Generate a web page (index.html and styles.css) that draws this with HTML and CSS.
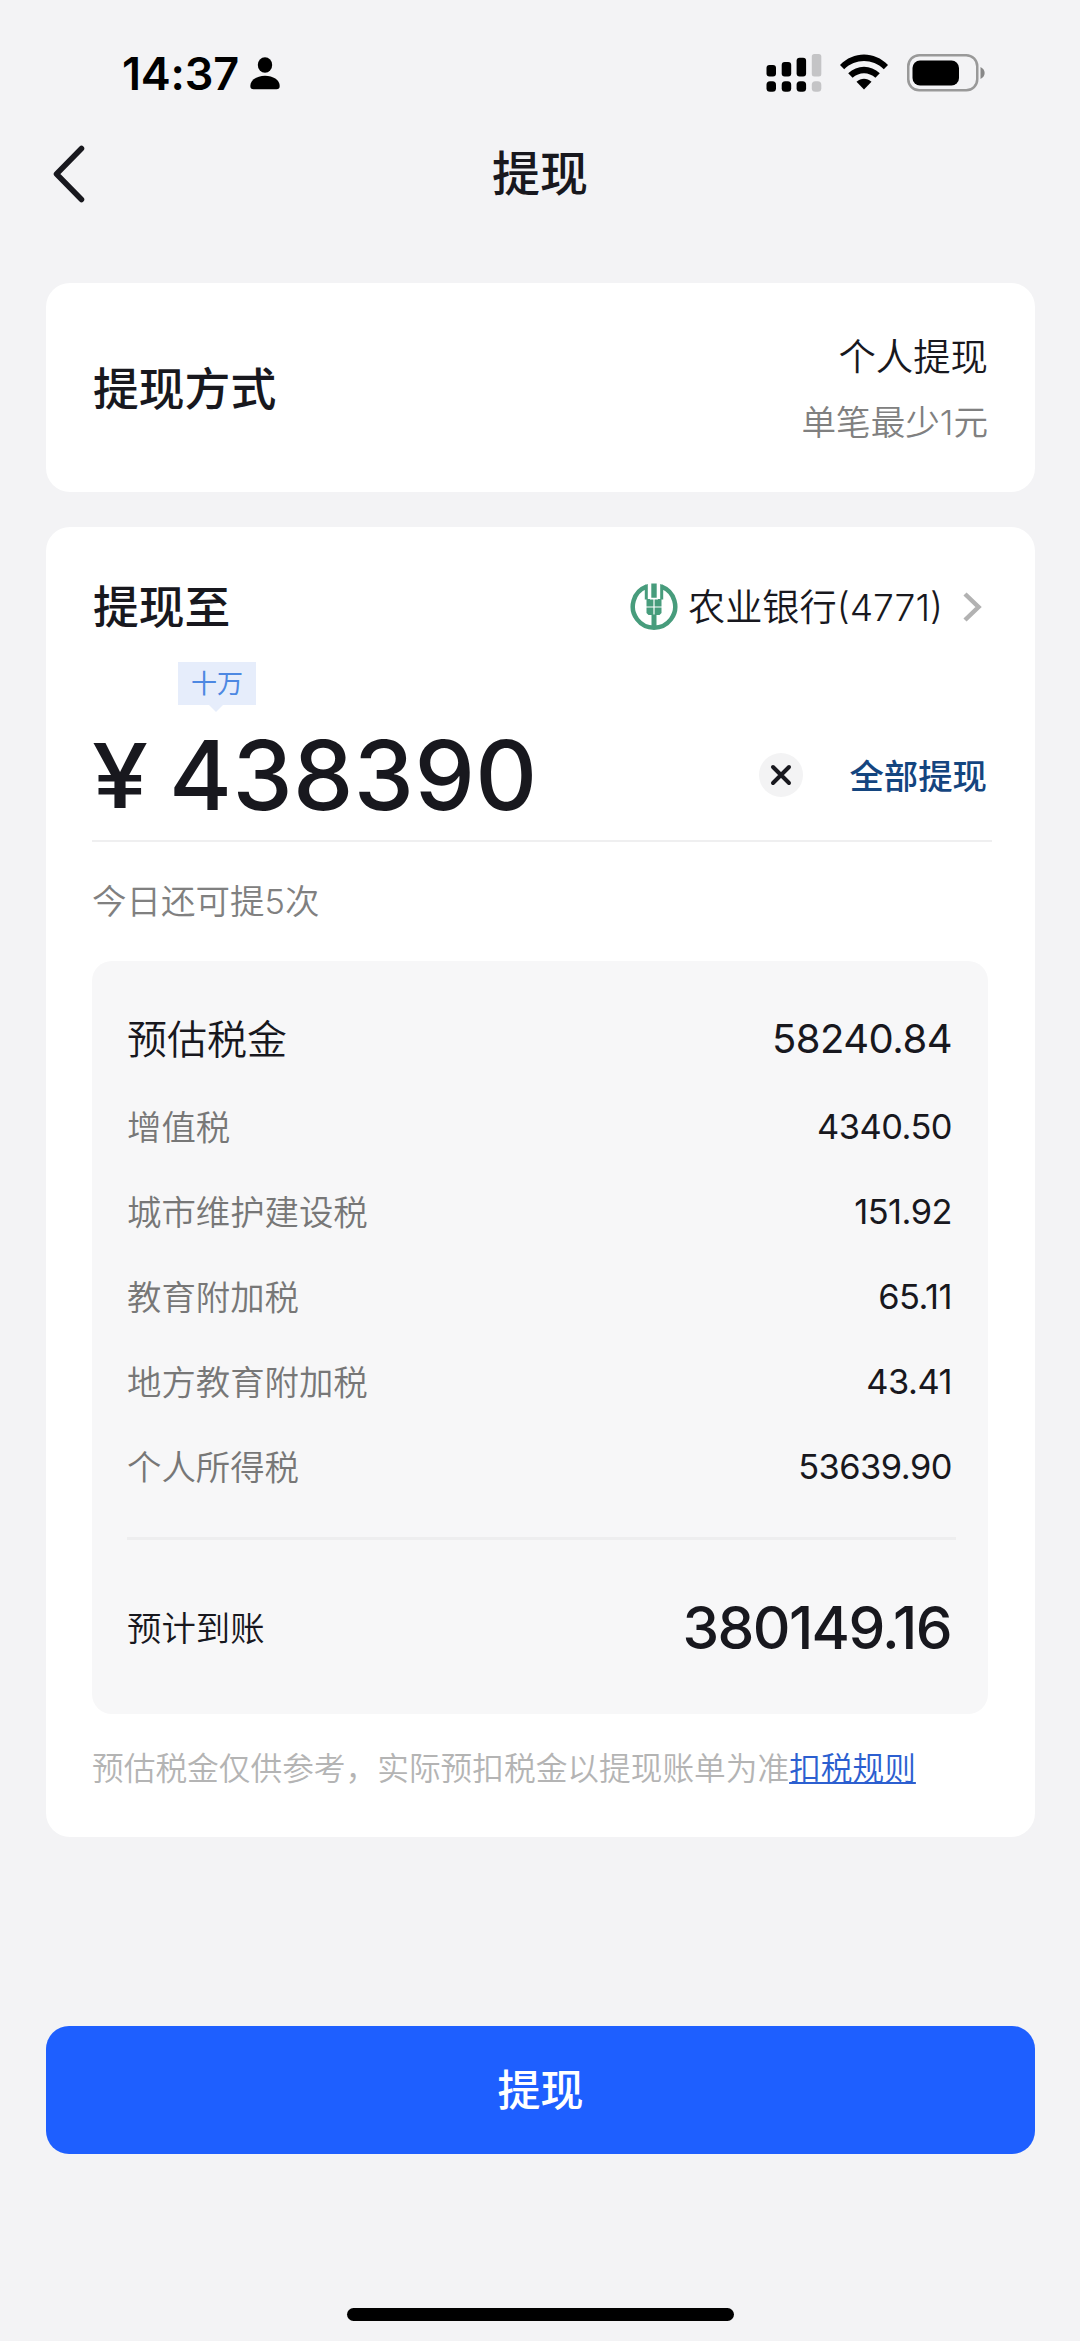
FILE: index.html
```html
<!DOCTYPE html>
<html lang="zh-CN">
<head>
<meta charset="utf-8">
<title>提现</title>
<link rel="stylesheet" href="styles.css">
</head>
<body>
<header class="status">
  <div class="status-left">
    <span class="time">14:37</span>
    <svg class="person" width="30" height="33" viewBox="0 0 30 33"><ellipse cx="15" cy="8" rx="7.2" ry="7.7"/><path d="M0.3 29C0.3 23 7 18.8 15 18.8S29.700 23 29.700 29C29.700 31.300 28.600 32.300 26.500 32.300H3.500C1.400 32.300 0.300 31.300 0.300 29Z"/></svg>
  </div>
  <div class="status-right">
    <svg width="56" height="38" viewBox="0 0 56 38">
      <rect x="0.500" y="11" width="9.500" height="11.500" rx="3"/><rect x="15.700" y="8" width="9.500" height="14.500" rx="3"/><rect x="30.600" y="3.800" width="9.500" height="18.700" rx="3"/><rect class="dim" x="45.800" y="0" width="9.500" height="22.500" rx="2.500"/>
      <rect x="0.500" y="27.200" width="9.500" height="10.500" rx="3.500"/><rect x="15.700" y="27.200" width="9.500" height="10.500" rx="3.500"/><rect x="30.600" y="27.200" width="9.500" height="10.500" rx="3.500"/><rect class="dim" x="45.800" y="27.200" width="9.500" height="10.500" rx="3.500"/>
    </svg>
    <svg class="wifi" width="50" height="36" viewBox="0 0 50 36"><path d="M1 11C14.500 -3 35.500 -3 49 11L44.800 15.200C33.500 4.300 16.500 4.300 5.200 15.200Z"/><path d="M9.200 19.300C18.200 10.500 31.800 10.500 40.800 19.300L36.400 23.800C29.800 17.600 20.200 17.600 13.600 23.800Z"/><path d="M17.500 27.800C22 23.800 28 23.800 32.500 27.800L25 35.500Z"/></svg>
    <svg class="battery" width="79" height="38" viewBox="0 0 79 38"><rect class="case" x="1.250" y="1.250" width="69" height="35" rx="11"/><rect x="5.500" y="6.500" width="46.500" height="25" rx="7.500"/><path class="nub" d="M73.500 13C79 15.500 79 22.500 73.500 25Z"/></svg>
  </div>
</header>
<nav class="nav">
  <svg class="back" width="34" height="60" viewBox="0 0 34 60"><path d="M29.500 4.500L4.500 30L29.500 55.500"/></svg>
  <h1>提现</h1>
</nav>
<main>
  <section class="card method">
    <h2>提现方式</h2>
    <div class="method-value">
      <div class="choice">个人提现</div>
      <div class="hint">单笔最少1元</div>
    </div>
  </section>
  <section class="card detail">
    <div class="target">
      <h2>提现至</h2>
      <div class="bank">
        <svg width="48" height="48" viewBox="0 0 48 48">
          <path class="ring" d="M16.500 3.700A21.200 21.200 0 1 0 31.500 3.700"/>
          <path class="wheat" d="M21.300 .5H26.700V14.800H21.300ZM14.800 2L17.800 1V16H20V16.500H23.400V23.400H16.500V16.500H14.800ZM33.200 2L30.200 1V16H28V16.500H24.600V23.400H31.500V16.500H33.200ZM16.500 24.600H23.400V32H18.500L16.500 30ZM24.600 24.600H31.500V30L29.500 32H24.600ZM21.500 31.500H26.500V45H21.500Z"/>
        </svg>
        <span class="bank-name">农业银行(4771)</span>
        <svg class="next" width="20" height="32" viewBox="0 0 20 32"><path d="M3 3L16.500 16L3 29"/></svg>
      </div>
    </div>
    <div class="amount">
      <span class="yen">¥</span>
      <span class="digits">438390<span class="unit">十万</span></span>
      <svg class="clear" width="44" height="44" viewBox="0 0 44 44"><circle cx="22" cy="22" r="22"/><path d="M14 14L30 30M30 14L14 30"/></svg>
      <span class="all">全部提现</span>
    </div>
    <div class="remain">今日还可提5次</div>
    <div class="panel">
      <div class="row total"><span>预估税金</span><b>58240.84</b></div>
      <div class="row"><span>增值税</span><b>4340.50</b></div>
      <div class="row"><span>城市维护建设税</span><b>151.92</b></div>
      <div class="row"><span>教育附加税</span><b>65.11</b></div>
      <div class="row"><span>地方教育附加税</span><b>43.41</b></div>
      <div class="row"><span>个人所得税</span><b>53639.90</b></div>
      <div class="arrival"><span>预计到账</span><b>380149.16</b></div>
    </div>
    <p class="note">预估税金仅供参考，实际预扣税金以提现账单为准<a>扣税规则</a></p>
  </section>
  <button class="submit">提现</button>
</main>
<div class="home"></div>
</body>
</html>
```

FILE: styles.css
```css
* { box-sizing: border-box; }
body {
  margin: 0;
  height: 2341px;
  display: flex;
  flex-direction: column;
  background: #f3f3f5;
  color: #18181e;
  font-family: Inter, "Noto Sans CJK SC", sans-serif;
  overflow: hidden;
}
svg { display: block; flex: none; }
h1, h2, p { margin: 0; font-weight: 500; }
h1, h2, span, div, b, p { white-space: nowrap; }

.status {
  height: 146px;
  padding: 54px 94px 0 122px;
  display: flex;
  justify-content: space-between;
  align-items: flex-start;
}
.status-left { display: flex; align-items: flex-start; color: #000; }
.time { width: 128px; font-size: 45px; font-weight: 600; line-height: 40px; letter-spacing: -0.200px; }
.person { margin-top: 3px; }
.status-right { display: flex; }
.wifi { margin-left: 17px; }
.battery { margin-left: 18px; }
.dim { fill: #c4c4c6; }
.case { fill: none; stroke: #999; stroke-width: 2.500; }
.nub { fill: #888; }

.nav {
  height: 137px;
  padding: 0 52px;
  display: grid;
  grid-template-columns: 34px 1fr 34px;
}
.back { margin-top: -2px; }
.back path { fill: none; stroke: #18181e; stroke-width: 5.500; stroke-linecap: round; stroke-linejoin: round; }
h1 { font-size: 48px; line-height: 56px; text-align: center; }

main { padding: 0 45px 0 46px; display: flex; flex-direction: column; }
.card { background: #fff; border-radius: 24px; padding: 0 47px 0 46px; }
.method { height: 209px; padding-top: 4px; display: flex; justify-content: space-between; align-items: center; }
h2 { margin-left: 1px; font-size: 45.800px; line-height: 60px; }
.method-value { text-align: right; }
.choice { font-size: 37.400px; line-height: 65px; }
.hint { font-size: 34.600px; line-height: 65px; color: #808080; }
.choice, .hint, .bank-name, .remain, .panel span, .note { font-weight: 350; }

.detail { margin-top: 35px; height: 1310px; padding-top: 50px; }
.target { height: 60px; display: flex; justify-content: space-between; align-items: center; }
.target h2 { padding-top: 2px; }
.bank { display: flex; align-items: center; }
.ring { fill: none; stroke: #479c7c; stroke-width: 4.500; }
.wheat { fill: #479c7c; }
.bank-name { margin: -5px 0 0 10px; font-size: 37.200px; }
.next { margin: 0 6px 0 19px; }
.next path { fill: none; stroke: #b2b2b2; stroke-width: 4.500; }

.amount {
  height: 205px;
  margin-right: -4px;
  padding: 86px 4px 0 0;
  display: flex;
  align-items: flex-start;
  border-bottom: 2px solid #efeff0;
}
.yen { width: 77px; font-size: 90px; line-height: 106px; font-weight: 500; transform: scaleX(1.12); transform-origin: 0 50%; }
.digits { position: relative; font-size: 96px; line-height: 105px; font-weight: 500; letter-spacing: 0.400px; }
.unit {
  position: absolute;
  left: 9px;
  top: -61px;
  width: 78px;
  height: 43px;
  background: #e6edfb;
  color: #4d88e2;
  font-size: 26px;
  line-height: 43px;
  font-weight: 400;
  letter-spacing: 0;
  text-align: center;
}
.unit::after {
  content: "";
  position: absolute;
  left: 31px;
  top: 43px;
  border: solid transparent;
  border-width: 7px 7px 0;
  border-top-color: #e6edfb;
}
.clear { margin: 30px 0 0 auto; }
.clear circle { fill: #f3f3f4; }
.clear path { fill: none; stroke: #18181e; stroke-width: 4; stroke-linecap: round; }
.all { margin: 28px 1px 0 46px; font-size: 34.400px; line-height: 52px; font-weight: 500; color: #14457f; }

.remain { height: 119px; padding-top: 34px; font-size: 34.500px; line-height: 52px; color: #808080; }
.panel { height: 753px; padding: 32px 36px 0 35px; border-radius: 20px; background: #f7f7f8; }
.row { height: 85px; display: flex; justify-content: space-between; align-items: center; font-size: 34.400px; }
.row span { margin-top: -4px; color: #777; }
.row b { font-weight: 400; letter-spacing: -0.500px; }
.row.total { height: 91px; font-size: 40px; }
.row.total span { color: #18181e; }
.arrival {
  margin-top: 28px;
  margin-right: -4px;
  padding-right: 4px;
  height: 178px;
  border-top: 3px solid #eeeeef;
  display: flex;
  justify-content: space-between;
  align-items: center;
  font-size: 34.400px;
}
.arrival span { margin-top: -4px; }
.arrival b { font-size: 58.500px; font-weight: 500; letter-spacing: -1.600px; margin-right: 1px; }
.note { margin-top: 29px; font-size: 31.700px; line-height: 51px; color: #b4b4b4; }
.note a { color: #2c5fd0; text-decoration: underline; text-decoration-thickness: 2px; text-underline-offset: 2px; }

.submit {
  margin-top: 189px;
  height: 128px;
  border: 0;
  padding: 0;
  border-radius: 23px;
  background: #1e5fff;
  color: #fff;
  font: 500 43px/128px Inter, "Noto Sans CJK SC", sans-serif;
}
.home { width: 387px; height: 13px; margin: 154px auto 0; border-radius: 7px; background: #000; }
```
